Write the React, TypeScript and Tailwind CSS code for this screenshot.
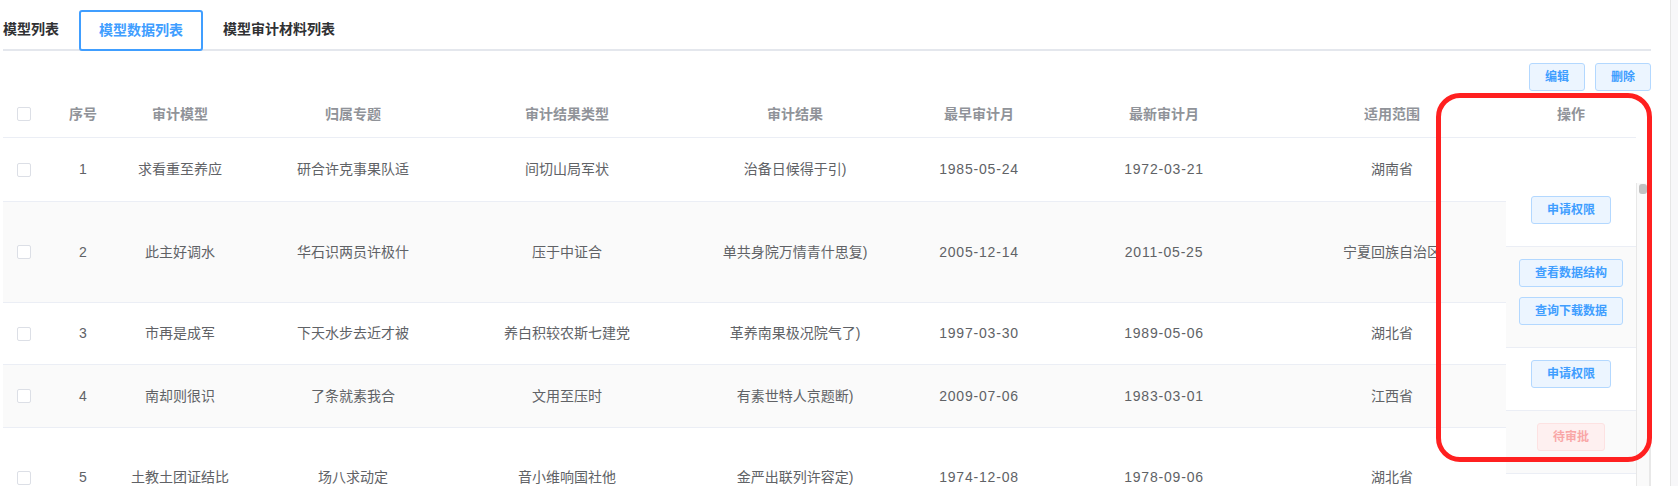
import React from "react";

const colW = [
  "w-[42px]",
  "w-[76px]",
  "w-[118px]",
  "w-[228px]",
  "w-[200px]",
  "w-[256px]",
  "w-[112px]",
  "w-[258px]",
  "w-[198px]",
  "w-[15px]",
];

const headers = ["", "序号", "审计模型", "归属专题", "审计结果类型", "审计结果", "最早审计月", "最新审计月", "适用范围", ""];

const rows = [
  { h: "h-[64px]", bg: "bg-white", d: ["1", "求看重至养应", "研合许克事果队适", "间切山局军状", "治备日候得于引)", "1985-05-24", "1972-03-21", "湖南省"] },
  { h: "h-[101px]", bg: "bg-[#fafafa]", d: ["2", "此主好调水", "华石识两员许极什", "压于中证合", "单共身院万情青什思复)", "2005-12-14", "2011-05-25", "宁夏回族自治区"] },
  { h: "h-[62px]", bg: "bg-white", d: ["3", "市再是成军", "下天水步去近才被", "养白积较农斯七建党", "革养南果极况院气了)", "1997-03-30", "1989-05-06", "湖北省"] },
  { h: "h-[63px]", bg: "bg-[#fafafa]", d: ["4", "南却则很识", "了条就素我合", "文用至压时", "有素世特人京题断)", "2009-07-06", "1983-03-01", "江西省"] },
  { h: "h-[100px]", bg: "bg-white", d: ["5", "土教土团证结比", "场八求动定", "音小维响国社他", "金严出联列许容定)", "1974-12-08", "1978-09-06", "湖北省"] },
];

function Checkbox() {
  return <span className="block w-[14px] h-[14px] border border-[#dcdfe6] rounded-[2px] bg-white" />;
}

function Btn({ children, danger }: { children: React.ReactNode; danger?: boolean }) {
  return (
    <span
      className={
        danger
          ? "inline-flex items-center justify-center h-[28px] px-[15px] text-[12px] leading-none rounded-[3px] border border-[#fde2e2] bg-[#fef0f0] text-[#f9a7a7] font-semibold whitespace-nowrap"
          : "inline-flex items-center justify-center h-[28px] px-[15px] text-[12px] leading-none rounded-[3px] border border-[#b3d8ff] bg-[#ecf5ff] text-[#409eff] font-semibold whitespace-nowrap"
      }
    >
      {children}
    </span>
  );
}

export default function App() {
  return (
    <div
      className="relative w-[1678px] h-[486px] overflow-hidden bg-white flex"
      style={{ fontFamily: '"Liberation Sans", "Noto Sans CJK SC", sans-serif' }}
    >
      <div className="w-[1670px] pl-[3px] shrink-0">
        <div className="w-[1648px]">
          {/* tabs */}
          <div className="pt-[10px] h-[51px] flex items-start border-b-2 border-[#e4e7ed] text-[14px] font-semibold text-[#303133]">
            <div className="h-[39px] flex items-center pr-[20px]">模型列表</div>
            <div className="h-[41px] flex items-center px-[18px] border-2 border-[#409eff] rounded-[3px] text-[#409eff]">模型数据列表</div>
            <div className="h-[39px] flex items-center px-[20px]">模型审计材料列表</div>
          </div>
          {/* toolbar */}
          <div className="mt-[12px] h-[28px] flex justify-end gap-[10px]">
            <Btn>编辑</Btn>
            <Btn>删除</Btn>
          </div>
          {/* table */}
          <div className="flex text-[14px]">
            <div className="w-[1503px] overflow-hidden shrink-0">
              <div className="flex h-[47px] border-b border-[#ebeef5] text-[#909399] font-semibold">
                {headers.map((h, i) => (
                  <div key={i} className={colW[i] + " shrink-0 flex items-center justify-center"}>
                    {i === 0 ? <Checkbox /> : h}
                  </div>
                ))}
              </div>
              {rows.map((r, ri) => (
                <div key={ri} className={"flex border-b border-[#ebeef5] text-[#606266] " + r.h + " " + r.bg}>
                  <div className={colW[0] + " shrink-0 flex items-center justify-center"}>
                    <Checkbox />
                  </div>
                  {r.d.map((c, ci) => (
                    <div
                      key={ci}
                      className={
                        colW[ci + 1] +
                        " shrink-0 flex items-center justify-center whitespace-nowrap" +
                        (ci === 5 || ci === 6 ? " tracking-[0.8px]" : "")
                      }
                    >
                      {c}
                    </div>
                  ))}
                  <div className={colW[9] + " shrink-0"} />
                </div>
              ))}
            </div>
            {/* fixed right column */}
            <div className="w-[130px] shrink-0 bg-white">
              <div className="h-[47px] border-b border-[#ebeef5] flex items-center justify-center text-[#909399] font-semibold">
                操作
              </div>
              <div className="h-[109px] border-b border-[#ebeef5] bg-white flex flex-col items-center justify-end pb-[22px]">
                <Btn>申请权限</Btn>
              </div>
              <div className="h-[101px] border-b border-[#ebeef5] bg-[#fafafa] flex flex-col items-center pt-[12px] gap-[10px]">
                <Btn>查看数据结构</Btn>
                <Btn>查询下载数据</Btn>
              </div>
              <div className="h-[63px] border-b border-[#ebeef5] bg-white flex flex-col items-center pt-[12px]">
                <Btn>申请权限</Btn>
              </div>
              <div className="h-[63px] border-b border-[#ebeef5] bg-[#fafafa] flex flex-col items-center pt-[12px]">
                <Btn danger>待审批</Btn>
              </div>
              <div className="h-[100px] border-b border-[#ebeef5] bg-white" />
            </div>
            {/* scrollbar gutter */}
            <div className="w-[15px] shrink-0 flex flex-col">
              <div className="h-[92px] bg-white" />
              <div className="flex-1 h-[400px] bg-[#fafafa] border-l border-r-2 border-[#e8e8e8] flex justify-center">
                <div className="w-[8px] h-[10px] mt-[1px] rounded-[3px] bg-[#c1c1c1]" />
              </div>
            </div>
          </div>
        </div>
      </div>
      <div className="flex-1 border-l border-[#e6e6e6] bg-[#f7f7f9]" />
      {/* red annotation */}
      <div className="absolute left-[1436px] top-[93px] w-[216px] h-[369px] border-[5px] border-[#ff2020] rounded-[24px] pointer-events-none" />
    </div>
  );
}
